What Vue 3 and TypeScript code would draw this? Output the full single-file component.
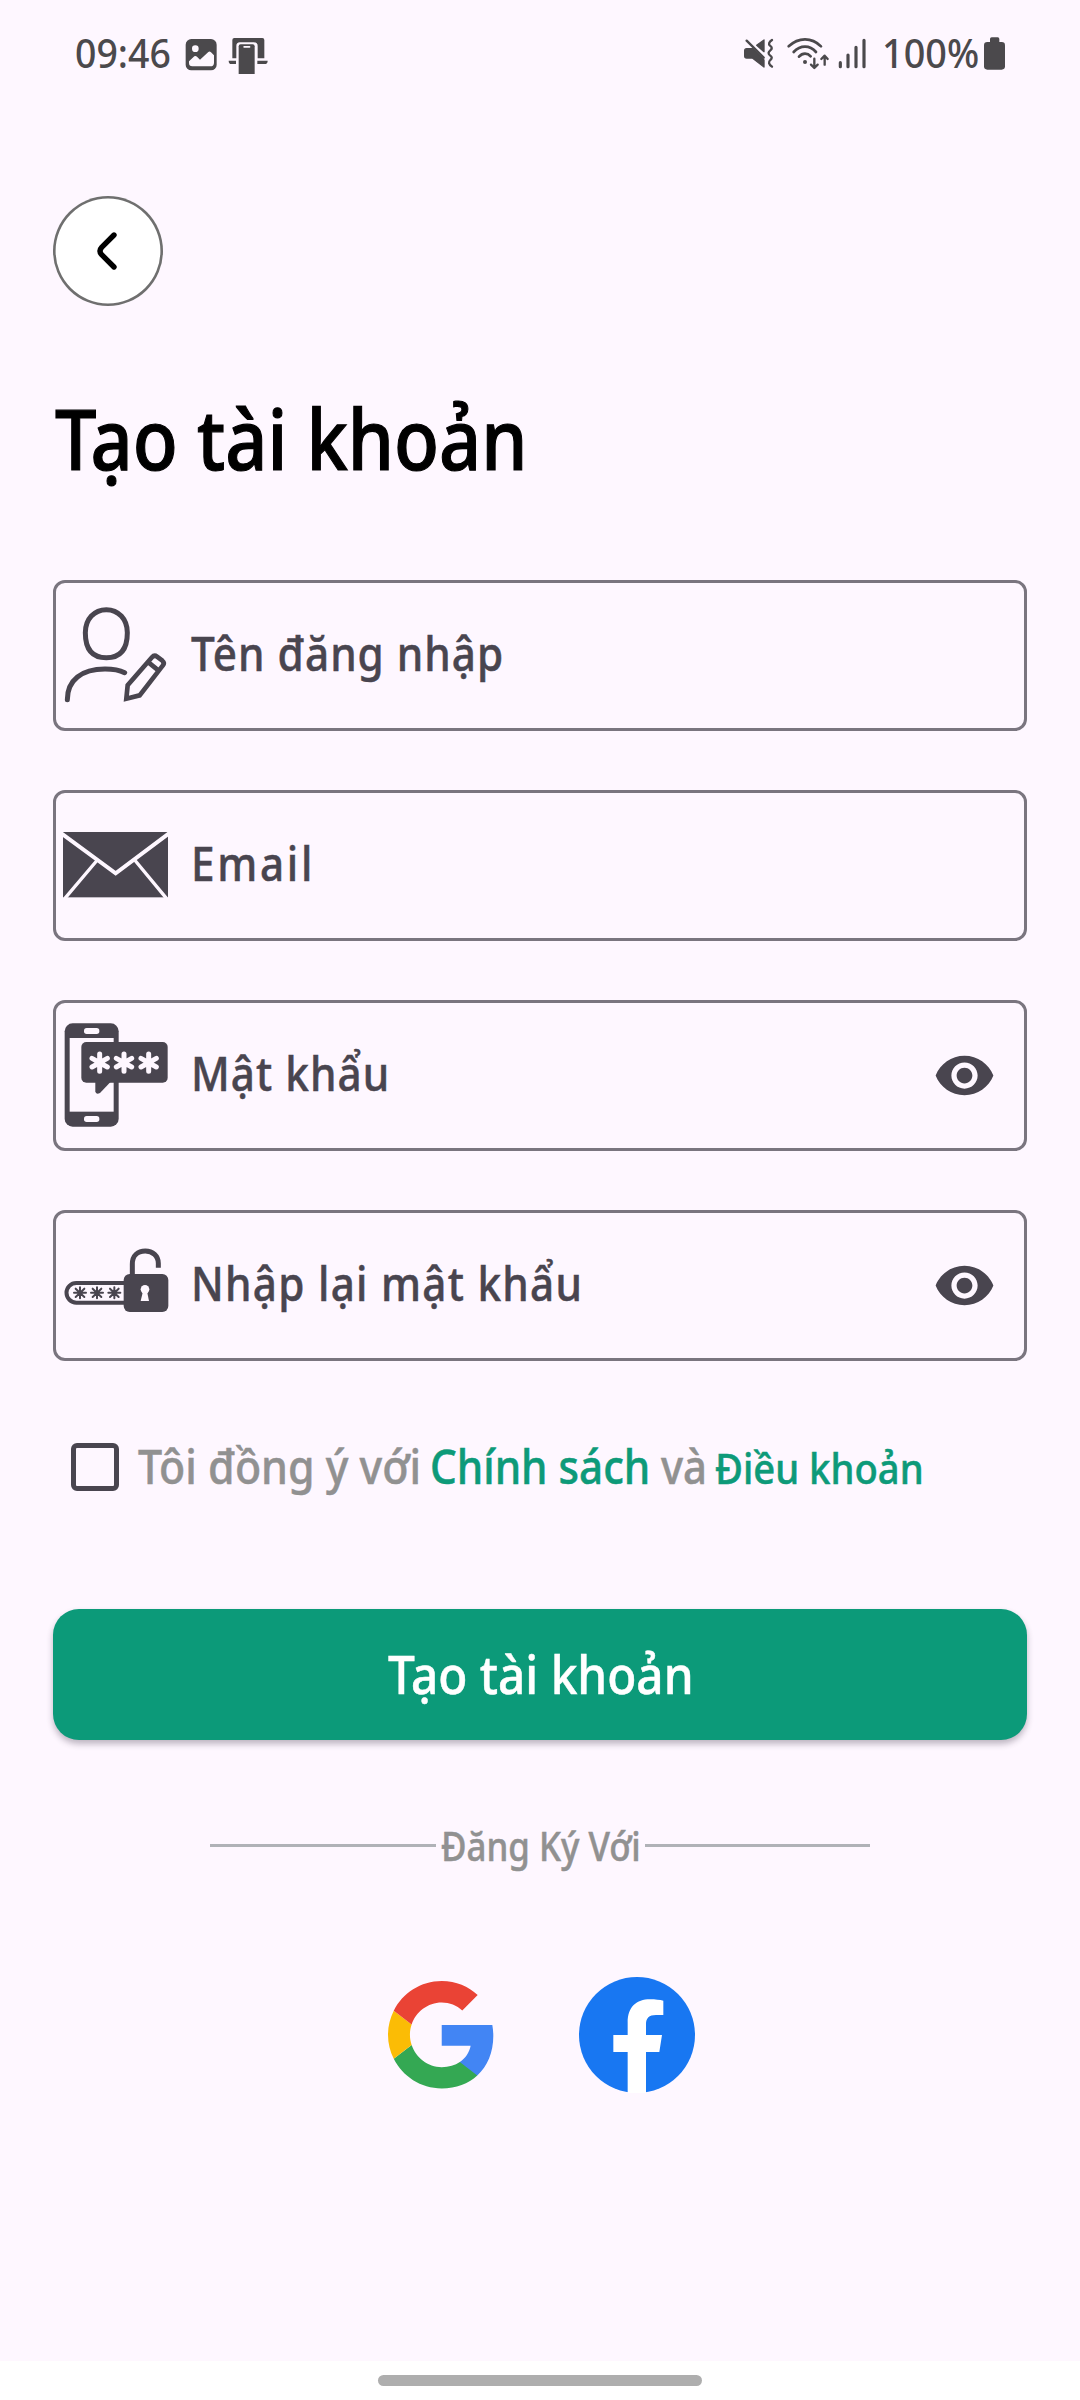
<script setup lang="ts">
import { ref } from 'vue'

type IconName = 'user' | 'mail' | 'otp' | 'lock'

interface Field {
  id: IconName
  label: string
  spacing: number
  secret: boolean
}

const fields: Field[] = [
  { id: 'user', label: 'Tên đăng nhập', spacing: 1.15, secret: false },
  { id: 'mail', label: 'Email', spacing: 3.1, secret: false },
  { id: 'otp', label: 'Mật khẩu', spacing: 1.2, secret: true },
  { id: 'lock', label: 'Nhập lại mật khẩu', spacing: 1.45, secret: true },
]

const agreed = ref(false)
const bubbleStars = [179, 252, 326]
const pillStars = [120, 171, 223]
</script>

<template>
  <main class="screen">
    <header class="status">
      <div class="status-left">
        <span class="time"><span class="t">09:46</span></span>
        <svg width="87" height="104" viewBox="400 -60 261 312">
          <rect x="408" y="57" width="93" height="94" rx="17" fill="#4b494c" />
          <circle cx="437" cy="86" r="10" fill="#fef7ff" />
          <path d="M418 124 L434 109 Q438 106 442 110 L451 119 L476 96 Q480 93 484 97 L493 106 V128 Q493 139 482 139 H428 Q418 139 418 129 Z" fill="#fef7ff" />
          <path d="M548 115 V60 Q548 54 554 54 H638 Q644 54 644 60 V115 H624 V78 Q624 67 613 67 H571 Q560 67 560 78 V115 Z" fill="#4b494c" />
          <path d="M537 122 H559 V132 H545 Q537 132 537 122 Z M623 122 H654 Q654 132 645 132 H623 Z" fill="#4b494c" />
          <path d="M567 79 Q567 73 573 73 H609 Q615 73 615 79 V162 H567 Z" fill="#4b494c" />
          <rect x="581" y="78" width="21" height="5" rx="2" fill="#fef7ff" />
        </svg>
      </div>
      <div class="status-right">
        <svg width="140" height="104" viewBox="66 -60 420 312" fill="none" stroke="#4b494c" stroke-linecap="round" stroke-linejoin="round">
          <path d="M80 86 H98 L132 120 V141 L97 114 H80 Q74 114 74 108 V92 Q74 86 80 86 Z" fill="#4b494c" stroke-width="4" />
          <path d="M80 62 L131 113" stroke-width="7" />
          <path d="M132 60 V95 L110 76 Z" fill="#4b494c" stroke-width="4" />
          <path d="M156 60 Q142 70 150 77 Q160 84 151 91 Q141 99 150 106 Q160 113 151 120 Q141 129 156 140" stroke-width="7" />
          <path d="M206 79 Q228 58 255 58 Q282 58 303 79" stroke-width="8" />
          <path d="M221 96 Q236 80 255 80 Q274 80 288 96" stroke-width="8" />
          <path d="M237 110 Q245 101 255 101 Q265 101 272 109" stroke-width="8" />
          <circle cx="255" cy="126" r="6" fill="#4b494c" stroke="none" />
          <path d="M283 116 V143 M273 134 L283 144 L293 134 M314 134 V108 M304 117 L314 107 L323 117" stroke-width="7" />
          <path d="M361 128 V140 M384 105 V140 M408 82 V140 M432 61 V140" stroke-width="9.500" />
        </svg>
        <span class="battery-text"><span class="t">100%</span></span>
        <svg width="25" height="104" viewBox="786 -60 75 312" fill="#4b494c">
          <rect x="810" y="52" width="28" height="24" rx="5" />
          <rect x="792" y="66" width="63" height="83" rx="10" />
        </svg>
      </div>
    </header>

    <button class="back" aria-label="Back">
      <svg width="110" height="110" viewBox="39 48 330 330">
        <path d="M222 165 L185 202 Q175 213 185 224 L222 261" fill="none" stroke="#000" stroke-width="16" stroke-linecap="round" />
      </svg>
    </button>

    <h1 class="title"><span class="t">Tạo tài khoản</span></h1>

    <form class="fields">
      <div v-for="f in fields" :key="f.id" class="field">
        <svg class="lead" width="120" height="145" viewBox="48 39 360 435">
          <g v-if="f.id === 'user'" fill="none" stroke="#49454f" stroke-linejoin="round" stroke-linecap="round">
            <path d="M199 119 C235 119 262 147 262 188 C262 238 240 263 199 263 C158 263 136 238 136 188 C136 147 163 119 199 119 Z" stroke-width="15" />
            <path d="M82 389 C82 330 125 297 195 297 C220 297 240 301 254 308" stroke-width="15" />
            <path d="M336 262 Q343 254 351 260 L367 272 Q375 279 368 287 L299 376 L259 386 L263 346 Z M329 280 L355 301" stroke-width="14" stroke-linejoin="miter" />
          </g>
          <g v-else-if="f.id === 'mail'">
            <rect x="69" y="156" width="315" height="196" fill="#49454f" />
            <path d="M64 160 L227 280 L390 158" fill="none" stroke="#fef7ff" stroke-width="12" />
            <path d="M172 240 L74 356 M284 240 L380 356" fill="none" stroke="#fef7ff" stroke-width="10" />
          </g>
          <g v-else-if="f.id === 'otp'">
            <rect x="74" y="100" width="162" height="310" rx="24" fill="#49454f" />
            <rect x="89" y="144" width="132" height="221" fill="#fef7ff" />
            <rect x="132" y="114" width="46" height="18" rx="8" fill="#fef7ff" />
            <rect x="132" y="378" width="46" height="18" rx="8" fill="#fef7ff" />
            <rect x="124" y="156" width="259" height="122" rx="15" fill="#49454f" />
            <path d="M166 270 V304 Q167 315 180 309 L215 272 Z" fill="#49454f" />
            <path
              v-for="x in bubbleStars"
              :key="x"
              :d="`M${x} 192 V244 M${x - 23} 205 L${x + 23} 231 M${x - 23} 231 L${x + 23} 205`"
              stroke="#fef7ff"
              stroke-width="15"
              stroke-linecap="round"
            />
          </g>
          <g v-else>
            <path d="M260 249 H109 A29.500 29.500 0 0 0 109 308 H260" fill="none" stroke="#49454f" stroke-width="12" />
            <path
              v-for="x in pillStars"
              :key="x"
              :d="`M${x} 262 V295 M${x - 18} 278 H${x + 18} M${x - 13} 266 L${x + 13} 291 M${x - 13} 291 L${x + 13} 266`"
              stroke="#49454f"
              stroke-width="6"
              stroke-linecap="round"
            />
            <rect x="251" y="222" width="134" height="114" rx="18" fill="#49454f" />
            <path d="M277 226 V192 C277 166 294 153 316 153 C338 153 355 168 355 190 V203" fill="none" stroke="#49454f" stroke-width="15" />
            <circle cx="315" cy="268" r="13" fill="#fef7ff" />
            <path d="M309 274 H321 L327 303 H302 Z" fill="#fef7ff" />
          </g>
        </svg>
        <span class="label" :style="{ letterSpacing: f.spacing + 'px' }">{{ f.label }}</span>
        <svg v-if="f.secret" class="eye" width="63" height="63" viewBox="0 0 24 24">
          <path
            fill="#49454f"
            d="M12 4.500C7 4.500 2.730 7.610 1 12c1.730 4.390 6 7.500 11 7.500s9.270-3.110 11-7.500c-1.730-4.390-6-7.500-11-7.500zM12 17c-2.760 0-5-2.240-5-5s2.240-5 5-5 5 2.240 5 5-2.240 5-5 5zm0-8c-1.660 0-3 1.340-3 3s1.340 3 3 3 3-1.340 3-3-1.340-3-3-3z"
          />
        </svg>
      </div>
    </form>

    <div class="agree">
      <span class="box" role="checkbox" :aria-checked="agreed" @click="agreed = !agreed"></span>
      <p class="agree-text">
        <span class="w1"><span class="t">Tôi đồng ý với</span></span>
        <a class="w2"><span class="t">Chính sách</span></a>
        <span class="w3"><span class="t">và</span></span>
        <a class="w4"><span class="t">Điều khoản</span></a>
      </p>
    </div>

    <button class="submit"><span class="t">Tạo tài khoản</span></button>

    <div class="divider">
      <i class="line"></i>
      <span class="divider-text"><span class="t">Đăng Ký Với</span></span>
      <i class="line"></i>
    </div>

    <div class="social">
      <svg width="105.300" height="107.500" viewBox="1 1 21.560 22">
        <path fill="#4285f4" d="M22.560 12.250c0-.78-.07-1.530-.2-2.250H12v4.260h5.920c-.26 1.370-1.040 2.530-2.210 3.310v2.770h3.570c2.080-1.920 3.280-4.740 3.280-8.090z" />
        <path fill="#34a853" d="M12 23c2.970 0 5.460-.98 7.280-2.660l-3.570-2.770c-.98.66-2.230 1.060-3.710 1.060-2.860 0-5.290-1.930-6.160-4.530L2.180 16.930C3.990 20.530 7.700 23 12 23z" />
        <path fill="#fbbc05" d="M5.840 14.090c-.22-.66-.35-1.360-.35-2.090s.13-1.430.35-2.090L2.180 7.070C1.430 8.550 1 10.220 1 12s.43 3.450 1.180 4.930l2.850-2.220.81-.62z" />
        <path fill="#ea4335" d="M12 5.380c1.620 0 3.060.56 4.210 1.640l3.150-3.150C17.450 2.090 14.970 1 12 1 7.700 1 3.990 3.470 2.180 7.070l3.660 2.840c.87-2.600 3.300-4.530 6.160-4.530z" />
      </svg>
      <svg width="116" height="116" viewBox="627 51 348 348">
        <circle cx="801" cy="225" r="174" fill="#1877f2" />
        <path fill="#fff" d="M773 399 V276 H730 V225 H773 V188 C773 141 799 118 840 118 C856 118 870 120 880 122 V165 H858 C837 165 828 175 828 192 V225 H876 L868 276 H828 V399 Z" />
      </svg>
    </div>

    <nav class="nav"><span class="pill"></span></nav>
  </main>
</template>

<style>
body {
  background: #fef7ff;
}
</style>

<style scoped>
.screen {
  width: 1080px;
  height: 2400px;
  display: flex;
  flex-direction: column;
  background: #fef7ff;
  font-family: 'Noto Sans', sans-serif;
  font-weight: 500;
  -webkit-text-stroke: 0.5px currentColor;
  overflow: hidden;
}
button {
  font: inherit;
  border: 0;
  padding: 0;
}
svg {
  display: block;
  flex: none;
}
.t {
  display: inline-block;
  white-space: nowrap;
  transform-origin: 0 50%;
}
.status {
  height: 104px;
  display: flex;
  justify-content: space-between;
  padding: 0 73px 0 75px;
  color: #4b494c;
  font-size: 39px;
  line-height: 105px;
  -webkit-text-stroke-width: 0;
}
.status-left,
.status-right {
  display: flex;
}
.time {
  width: 108px;
}
.time .t {
  transform: scaleX(0.96);
}
.battery-text {
  width: 100px;
}
.battery-text .t {
  transform: scaleX(0.97);
}
.back {
  box-sizing: border-box;
  width: 110px;
  height: 110px;
  margin: 92px 0 0 53px;
  border-radius: 50%;
  background: #fff;
  box-shadow: inset 0 0 0 2.6px #6f6f6f;
}
.title {
  margin: 81px 0 0 54.6px;
  height: 101px;
  line-height: 101px;
  font-size: 84px;
  font-weight: 500;
  color: #000;
  -webkit-text-stroke-width: 1.2px;
}
.title .t {
  transform: scaleX(0.878);
}
.fields {
  margin: 92px 53px 0;
  display: flex;
  flex-direction: column;
  gap: 59px;
}
.field {
  box-sizing: border-box;
  height: 151px;
  border: 3px solid #7a757f;
  border-radius: 12px;
  display: flex;
  align-items: center;
}
.label {
  flex: 1;
  margin-left: 15px;
  padding-bottom: 6px;
  font-size: 48px;
  color: #49454f;
  white-space: nowrap;
  transform: scaleX(0.88);
  transform-origin: 0 50%;
}
.eye {
  margin-right: 28px;
}
.agree {
  margin: 76px 0 0 71px;
  height: 60px;
  display: flex;
  align-items: center;
}
.box {
  box-sizing: border-box;
  width: 48px;
  height: 48px;
  border: 5px solid #49454f;
  border-radius: 6px;
}
.agree-text {
  margin: 0 0 0 19px;
  display: flex;
  align-items: baseline;
  font-size: 48px;
  line-height: 60px;
  color: #919191;
}
.w1 {
  width: 292px;
}
.w1 .t {
  transform: scaleX(0.894);
}
.w2 {
  width: 230.5px;
  color: #0d9a79;
}
.w2 .t {
  transform: scaleX(0.879);
}
.w3 {
  width: 54px;
}
.w3 .t {
  transform: scaleX(0.872);
}
.w4 {
  font-size: 42px;
  color: #0d9a79;
}
.w4 .t {
  transform: scaleX(0.91);
}
.submit {
  margin: 112px 53px 0;
  height: 131px;
  padding: 0 0 3px 2px;
  border-radius: 26px;
  background: #0c9a79;
  color: #fff;
  font-size: 53px;
  box-shadow: 0 4px 6px rgba(40, 30, 50, 0.3);
}
.submit .t {
  transform: scaleX(0.9);
  transform-origin: 50% 50%;
}
.divider {
  margin: 75px 210px 0;
  height: 60px;
  display: flex;
  align-items: center;
}
.line {
  flex: 1;
  height: 3px;
  margin-top: 1px;
  background: #b0b2b7;
}
.divider-text {
  width: 204px;
  padding-left: 5px;
  font-size: 39px;
  line-height: 61px;
  color: #919191;
}
.divider-text .t {
  transform: scaleX(0.894);
}
.social {
  margin: 102px 0 0 388.3px;
  display: flex;
  align-items: center;
  gap: 85.4px;
}
.nav {
  margin-top: auto;
  height: 39px;
  background: #fff;
  display: flex;
  justify-content: center;
}
.pill {
  width: 324px;
  height: 11px;
  margin-top: 14px;
  border-radius: 6px;
  background: #aeaeae;
}
</style>
